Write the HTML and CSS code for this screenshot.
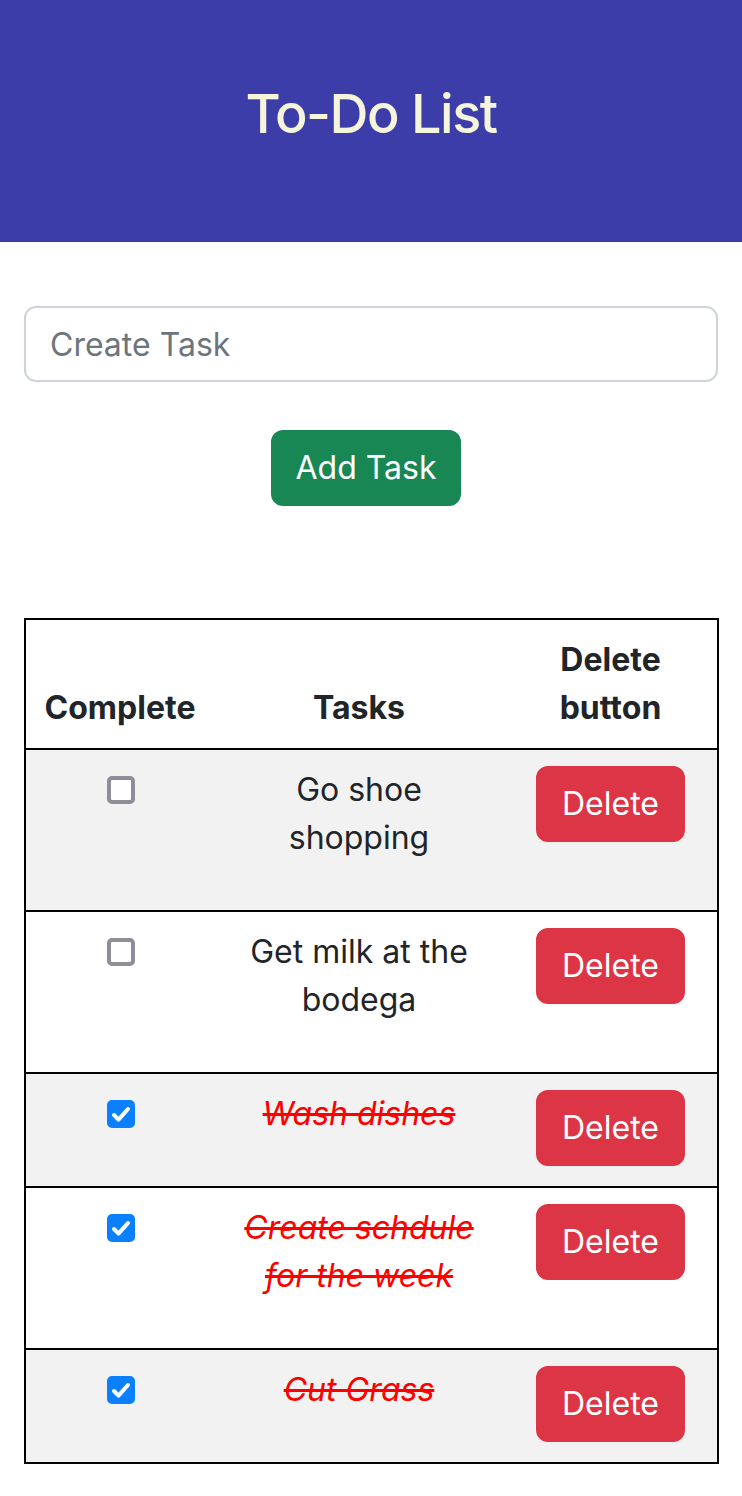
FILE: index.html
```html
<!DOCTYPE html>
<html lang="en">
<head>
<meta charset="utf-8">
<title>To-Do List</title>
<link rel="stylesheet" href="styles.css">
</head>
<body>
<header class="banner">
  <h1 class="title">To-Do List</h1>
</header>
<main class="container">
  <form class="add-form">
    <input class="task-input" type="text" placeholder="Create Task">
    <button class="btn btn-add" type="button">Add Task</button>
  </form>
  <table class="todo-table">
    <colgroup>
      <col class="col-complete">
      <col class="col-task">
      <col class="col-delete">
    </colgroup>
    <thead>
      <tr>
        <th>Complete</th>
        <th>Tasks</th>
        <th>Delete button</th>
      </tr>
    </thead>
    <tbody>
      <tr class="row-alt">
        <td class="cell-check"><span class="check"><input type="checkbox" class="check-input"></span></td>
        <td class="cell-task"><p class="task">Go shoe shopping</p></td>
        <td class="cell-del"><button class="btn btn-del" type="button">Delete</button></td>
      </tr>
      <tr>
        <td class="cell-check"><span class="check"><input type="checkbox" class="check-input"></span></td>
        <td class="cell-task"><p class="task">Get milk at the bodega</p></td>
        <td class="cell-del"><button class="btn btn-del" type="button">Delete</button></td>
      </tr>
      <tr class="row-alt">
        <td class="cell-check"><span class="check"><input type="checkbox" class="check-input" checked><svg class="check-mark" viewBox="0 0 28 28"><path d="M7 15l4.5 4.6L21 9" fill="none" stroke="#fff" stroke-width="4" stroke-linecap="round" stroke-linejoin="round"/></svg></span></td>
        <td class="cell-task"><p class="task done">Wash dishes</p></td>
        <td class="cell-del"><button class="btn btn-del" type="button">Delete</button></td>
      </tr>
      <tr>
        <td class="cell-check"><span class="check"><input type="checkbox" class="check-input" checked><svg class="check-mark" viewBox="0 0 28 28"><path d="M7 15l4.5 4.6L21 9" fill="none" stroke="#fff" stroke-width="4" stroke-linecap="round" stroke-linejoin="round"/></svg></span></td>
        <td class="cell-task"><p class="task done">Create schdule for the week</p></td>
        <td class="cell-del"><button class="btn btn-del" type="button">Delete</button></td>
      </tr>
      <tr class="row-alt">
        <td class="cell-check"><span class="check"><input type="checkbox" class="check-input" checked><svg class="check-mark" viewBox="0 0 28 28"><path d="M7 15l4.5 4.6L21 9" fill="none" stroke="#fff" stroke-width="4" stroke-linecap="round" stroke-linejoin="round"/></svg></span></td>
        <td class="cell-task"><p class="task done">Cut Grass</p></td>
        <td class="cell-del"><button class="btn btn-del" type="button">Delete</button></td>
      </tr>
    </tbody>
  </table>
</main>
</body>
</html>
```
FILE: styles.css
```css
* { box-sizing: border-box; }

body {
  margin: 0;
  font-family: Inter, "Noto Sans", "Liberation Sans", sans-serif;
  font-size: 32px;
  line-height: 48px;
  color: #212529;
  background: #fff;
}

.banner {
  height: 242px;
  background: #3d3daa;
  padding-top: 81px;
  text-align: center;
}

.title {
  margin: 0;
  font-size: 54px;
  line-height: 66px;
  font-weight: 500;
  color: #f5f5dc;
  letter-spacing: -1.5px;
}

.container {
  padding: 64px 24px 0;
}

.add-form {
  display: flex;
  flex-direction: column;
  align-items: center;
  gap: 48px;
}

.task-input {
  width: 100%;
  height: 76px;
  padding: 12px 24px;
  border: 2px solid #ced4da;
  border-radius: 12px;
  font-family: inherit;
  font-size: 32px;
  line-height: 48px;
  color: #212529;
  background: #fff;
}

.task-input::placeholder { color: #6c757d; }

.btn {
  font-family: inherit;
  font-size: 32px;
  line-height: 48px;
  padding: 12px 0;
  border: 2px solid transparent;
  border-radius: 12px;
  color: #fff;
  white-space: nowrap;
  text-align: center;
  cursor: pointer;
}

.btn-add {
  width: 190px;
  margin-right: 10px;
  background: #198754;
  border-color: #198754;
}

.todo-table {
  margin-top: 112px;
  width: 693px;
  border-collapse: collapse;
  table-layout: fixed;
  border: 2px solid #000;
}

.col-complete { width: 189px; }
.col-task { width: 290px; }
.col-delete { width: 214px; }

.todo-table th {
  padding: 16px;
  font-weight: 700;
  text-align: center;
  vertical-align: bottom;
  border-bottom: 2px solid #000;
}

.todo-table td {
  padding: 16px;
  text-align: center;
  vertical-align: top;
}

.todo-table tbody tr { border-bottom: 2px solid #000; }

.row-alt { background: #f2f2f2; }

.check {
  display: inline-grid;
  vertical-align: top;
  margin-top: 10px;
  margin-left: 2px;
}

.check-input {
  grid-area: 1 / 1;
  appearance: none;
  -webkit-appearance: none;
  width: 28px;
  height: 28px;
  margin: 0;
  border: 4px solid #8e8e98;
  border-radius: 5px;
  background: #fff;
}

.check-input:checked {
  background: #0b80ff;
  border-color: #0b80ff;
}

.check-mark {
  grid-area: 1 / 1;
  width: 28px;
  height: 28px;
}

.task {
  margin: 0 0 32px;
}

.task.done {
  color: #ff0000;
  font-style: italic;
  text-decoration: line-through;
}

.btn-del {
  width: 149px;
  background: #dc3545;
  border-color: #dc3545;
  vertical-align: top;
}
```
